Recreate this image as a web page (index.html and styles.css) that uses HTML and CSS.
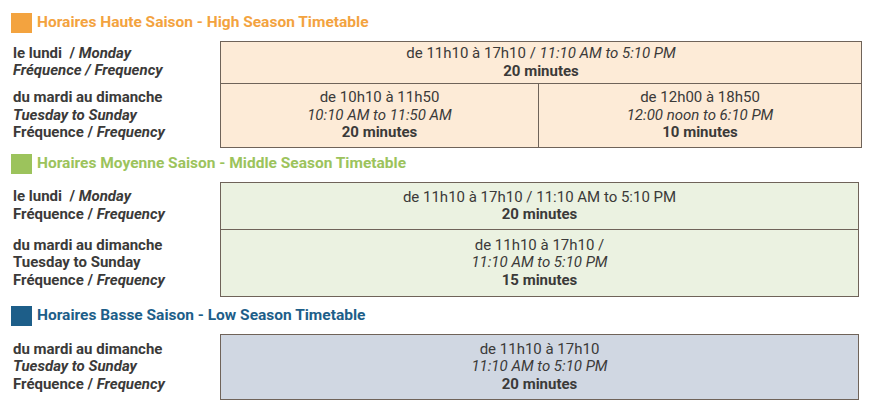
FILE: index.html
```html
<!DOCTYPE html>
<html lang="fr">
<head>
<meta charset="utf-8">
<title>Horaires</title>
<link rel="stylesheet" href="styles.css">
</head>
<body>
<div class="page">
  <section class="season season-high">
    <h2 class="season-title"><span class="swatch"></span>Horaires Haute Saison - High Season Timetable</h2>
    <div class="tt tt-wide">
      <div class="row row-h42">
        <div class="label"><div>le lundi&nbsp; / <i>Monday</i></div><div><i>Fréquence / Frequency</i></div></div>
        <div class="cell first"><div>de 11h10 à 17h10 / <i>11:10 AM to 5:10 PM</i></div><div><b>20 minutes</b></div></div>
      </div>
      <div class="row row-h64">
        <div class="label"><div>du mardi au dimanche</div><div><i>Tuesday to Sunday</i></div><div>Fréquence / <i>Frequency</i></div></div>
        <div class="cell split">
          <div class="sub"><div>de 10h10 à 11h50</div><div><i>10:10 AM to 11:50 AM</i></div><div><b>20 minutes</b></div></div>
          <div class="sub"><div>de 12h00 à 18h50</div><div><i>12:00 noon to 6:10 PM</i></div><div><b>10 minutes</b></div></div>
        </div>
      </div>
    </div>
  </section>

  <section class="season season-mid">
    <h2 class="season-title"><span class="swatch"></span>Horaires Moyenne Saison - Middle Season Timetable</h2>
    <div class="tt">
      <div class="row row-h47">
        <div class="label"><div>le lundi&nbsp; / <i>Monday</i></div><div>Fréquence / <i>Frequency</i></div></div>
        <div class="cell first"><div>de 11h10 à 17h10 / 11:10 AM to 5:10 PM</div><div><b>20 minutes</b></div></div>
      </div>
      <div class="row row-h67">
        <div class="label"><div>du mardi au dimanche</div><div>Tuesday to Sunday</div><div>Fréquence / <i>Frequency</i></div></div>
        <div class="cell"><div>de 11h10 à 17h10 /</div><div><i>11:10 AM to 5:10 PM</i></div><div><b>15 minutes</b></div></div>
      </div>
    </div>
  </section>

  <section class="season season-low">
    <h2 class="season-title"><span class="swatch"></span>Horaires Basse Saison - Low Season Timetable</h2>
    <div class="tt">
      <div class="row row-h65">
        <div class="label"><div>du mardi au dimanche</div><div><i>Tuesday to Sunday</i></div><div>Fréquence / <i>Frequency</i></div></div>
        <div class="cell first"><div>de 11h10 à 17h10</div><div><i>11:10 AM to 5:10 PM</i></div><div><b>20 minutes</b></div></div>
      </div>
    </div>
  </section>
</div>
</body>
</html>
```

FILE: styles.css
```css
* { box-sizing: border-box; }
html, body { margin: 0; padding: 0; background: #ffffff; }
body {
  font-family: Roboto, "Liberation Sans", sans-serif;
  color: #3b3a39;
  font-size: 15px;
  line-height: 17.5px;
}
.page { padding: 12px 0 0 11px; }

.season-high { --accent: #f3a33f; --fill: #fdebd7; }
.season-mid  { --accent: #9cc35c; --fill: #ebf2e1; margin-top: 5px; }
.season-low  { --accent: #1d5e89; --fill: #d0d7e2; margin-top: 8px; }

.season-title {
  display: flex;
  align-items: center;
  gap: 5px;
  margin: 0 0 8px 0;
  height: 21px;
  font-size: 15.5px;
  font-weight: 700;
  color: var(--accent);
}
.swatch {
  width: 21px;
  height: 20px;
  background: var(--accent);
  flex: none;
}

.tt { width: 848px; }
.tt-wide { width: 851px; }

.row {
  display: grid;
  grid-template-columns: 209px 1fr;
}
.row-h42 { height: 42px; }
.row-h64 { height: 64px; }
.row-h47 { height: 47px; }
.row-h67 { height: 67px; }
.row-h65 { height: 65px; }
.row:last-child { height: auto; }
.row-h64:last-child { min-height: 65px; }
.row-h67:last-child { min-height: 68px; }
.row-h65:last-child { min-height: 66px; }

.label {
  align-self: center;
  padding-left: 2px;
  font-weight: 700;
}
.cell {
  background: var(--fill);
  border: 1px solid #6f6359;
  border-top: none;
  display: flex;
  flex-direction: column;
  justify-content: center;
  text-align: center;
}
.cell.first { border-top: 1px solid #6f6359; }
.row:not(:first-child) .cell { border-top: 1px solid #6f6359; }
.row:not(:last-child) .cell { border-bottom: none; }
.cell b { font-weight: 700; }

.cell.split {
  display: grid;
  grid-template-columns: 317px 1fr;
}
.sub {
  display: flex;
  flex-direction: column;
  justify-content: center;
}
.sub + .sub { border-left: 1px solid #6f6359; }
```
